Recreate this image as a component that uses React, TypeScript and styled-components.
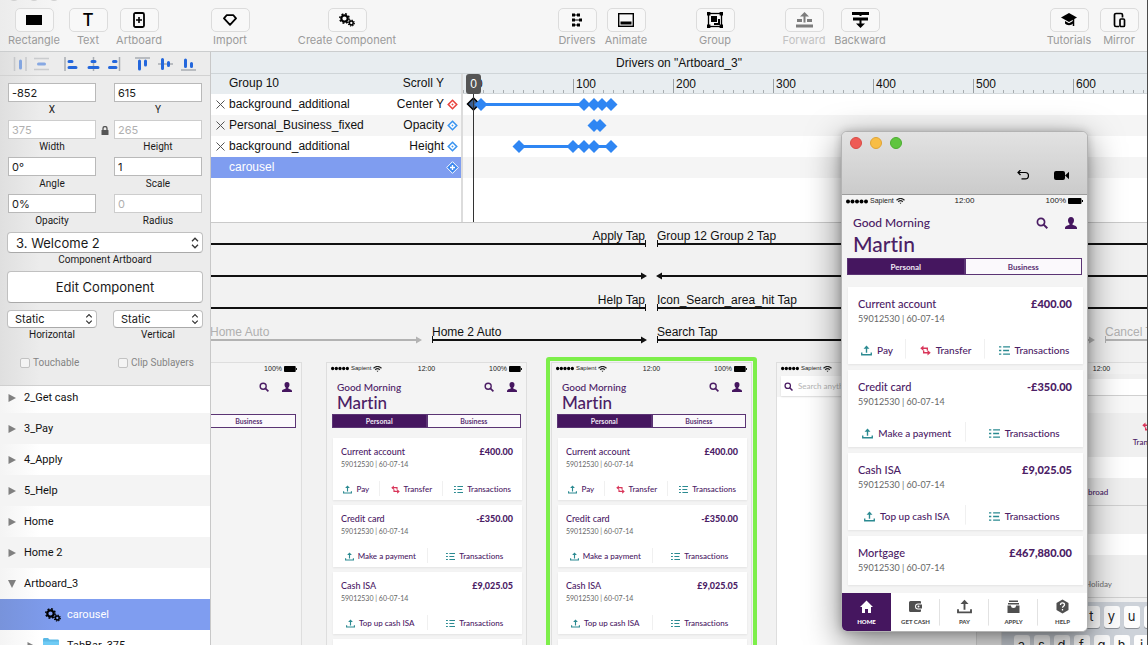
import React from 'react';
import styled, { createGlobalStyle, css } from 'styled-components';

const ui = `Inter, "Liberation Sans", sans-serif`;
const compact = `Roboto, "Liberation Sans", sans-serif`;
const helv = `"Liberation Sans", Arial, sans-serif`;
const round = `Lato, "Open Sans", sans-serif`;

const GlobalStyle = createGlobalStyle`
  *, *::before, *::after { box-sizing: border-box; }
  body { margin: 0; overflow: hidden; font-family: ${ui}; color: #111; }
  button, input, select { font: inherit; color: inherit; margin: 0; }
  svg { display: block; flex: none; }
`;

/* ---------- Shell ---------- */

const Shell = styled.div`
  position: relative;
  display: flex;
  flex-direction: column;
  height: 100vh;
  overflow: hidden;
  background: #f3f3f3;
  border-right: 1px solid #4a4a4a;
`;
const Workspace = styled.div`
  flex: 1;
  min-height: 0;
  display: grid;
  grid-template-columns: 211px minmax(0, 1fr);
`;

/* ---------- Toolbar ---------- */

const Toolbar = styled.header`
  position: relative;
  display: flex;
  gap: 47px;
  height: 52px;
  padding: 8px 8px 0;
  background: linear-gradient(90deg, #ececec, #f6f6f6 60px);
  border-bottom: 1px solid #cbcdce;
  overflow: hidden;
`;
const TitleLights = styled.div`
  position: absolute;
  top: -11px;
  left: 8px;
  display: flex;
  gap: 8px;
  i { width: 12px; height: 12px; border-radius: 50%; background: #cfcfcf; }
`;
const ToolGroup = styled.div<{ $gap?: number; $lead?: string }>`
  display: flex;
  gap: ${(p) => p.$gap ?? 0}px;
  margin-left: ${(p) => p.$lead ?? '0'};
`;
const ToolButton = styled.button<{ $w: number; $dim?: boolean }>`
  width: ${(p) => p.$w}px;
  display: flex;
  flex-direction: column;
  align-items: center;
  padding: 0;
  border: 0;
  background: none;
  font-size: 11px;
  line-height: 16px;
  white-space: nowrap;
  color: ${(p) => (p.$dim ? '#c2c2c2' : '#9b9b9b')};
`;
const ToolFace = styled.span<{ $dim?: boolean }>`
  width: 39px;
  height: 24px;
  flex: none;
  display: grid;
  place-items: center;
  border: 1px solid #dcdcdc;
  border-radius: 5px;
  background: #f8f8f8;
  color: ${(p) => (p.$dim ? '#7d7d7d' : '#000')};
`;
const LetterIcon = styled.span`
  font-size: 17px;
  line-height: 22px;
  font-weight: 500;
`;

const Gears = ({ w = 16 }: { w?: number }) => (
  <svg width={w} height={w} viewBox="0 0 16 16" fill="none" stroke="#000">
    <circle cx="5.500" cy="6.500" r="3.200" strokeWidth="2.200" />
    <circle cx="5.500" cy="6.500" r="4.700" strokeWidth="1.500" strokeDasharray="1.850 1.850" />
    <circle cx="12.300" cy="11" r="1.900" strokeWidth="1.500" />
    <circle cx="12.300" cy="11" r="3" strokeWidth="1.200" strokeDasharray="1.200 1.160" />
  </svg>
);

const icons = {
  rect: <svg width="16" height="10"><rect width="16" height="10" fill="#000" /></svg>,
  text: <LetterIcon>T</LetterIcon>,
  artboard: (
    <svg width="12" height="16" viewBox="0 0 12 16" fill="none" stroke="#000" strokeWidth="1.800">
      <rect x="1" y="1" width="10" height="14" rx="1.500" /><path d="M3 8h6M6 5v6" strokeWidth="1.600" />
    </svg>
  ),
  gem: (
    <svg width="14" height="12" viewBox="0 0 14 12" fill="none" stroke="#000" strokeWidth="1.800" strokeLinejoin="round">
      <path d="M3.600 1.200h6.800L13 4.400 7 10.800 1 4.400z" />
    </svg>
  ),
  gears: <Gears />,
  drivers: (
    <svg width="12" height="14" viewBox="0 0 12 14" fill="#000" stroke="#000">
      <path d="M1 2h6M3 7h6M1 12h6" strokeWidth="1" />
      <path d="M1 .5h3v3H1zM6 .5h3v3H6zM1 5.500h3v3H1zM8 5.500h3v3H8zM1 10.500h3v3H1zM6 10.500h3v3H6z" stroke="none" />
    </svg>
  ),
  animate: (
    <svg width="16" height="14"><rect x=".7" y=".7" width="14.600" height="12.600" fill="none" stroke="#000" strokeWidth="1.400" /><rect x="2.500" y="8.500" width="11" height="3" /></svg>
  ),
  group: (
    <svg width="16" height="16" viewBox="0 0 16 16">
      <rect x="1.500" y="1.500" width="13" height="13" fill="none" stroke="#000" strokeWidth="1.300" />
      <path d="M0 0h3.400v3.400H0zM12.600 0H16v3.400h-3.400zM0 12.600h3.400V16H0zM12.600 12.600H16V16h-3.400zM4 4h6v6H4zM11 7h2v6H7v-2h4z" />
    </svg>
  ),
  forward: (
    <svg width="17" height="16" viewBox="0 0 17 16" fill="currentColor">
      <path d="M8.500 0 13 4.500H9.500v6h-2v-6H4zM1 7h5v3H1zM11 7h5v3h-5zM0 12.500h17v3H0z" />
    </svg>
  ),
  backward: (
    <svg width="17" height="16" viewBox="0 0 17 16"><path d="M0 0h17v3H9.500v1h-2V3H0zM1 5.500h15v3H9.500v3H13L8.500 16 4 11.500h3.500v-3H1z" /></svg>
  ),
  tutorials: (
    <svg width="16" height="14" viewBox="0 0 16 14">
      <path d="M8 0l8 4.500-8 4.500L0 4.500z" /><path d="M4 8l4 2.300L12 8v2.500c-2 2.200-6 2.200-8 0z" /><path d="M12.500 5.500V13" stroke="#000" strokeWidth="1.500" />
    </svg>
  ),
  mirror: (
    <svg width="13" height="16" viewBox="0 0 13 16" fill="none" stroke="#000" strokeWidth="1.700">
      <path d="M6 14.500H3A1.500 1.500 0 0 1 1.500 13V3A1.500 1.500 0 0 1 3 1.500h5A1.500 1.500 0 0 1 9.500 3v2.500" /><rect x="7" y="7" width="4.500" height="7.500" rx="1" />
    </svg>
  ),
};

const Tool = ({ w, label, icon, dim }: { w: number; label: string; icon: keyof typeof icons; dim?: boolean }) => (
  <ToolButton type="button" $w={w} $dim={dim} disabled={dim}>
    <ToolFace $dim={dim}>{icons[icon]}</ToolFace>
    {label}
  </ToolButton>
);

/* ---------- Inspector ---------- */

const Sidebar = styled.aside`
  display: flex;
  flex-direction: column;
  min-height: 0;
  overflow: hidden;
  border-right: 1px solid #c8c8c8;
  background: linear-gradient(90deg, #dfdfdf, #ececec 40px);
`;
const AlignBar = styled.div`
  display: flex;
  align-items: center;
  height: 24px;
  flex: none;
  padding-left: 13px;
  border-bottom: 1px solid #d2d2d2;
`;
const AlignButton = styled.button<{ $gapAfter?: number; $dim?: boolean }>`
  padding: 0;
  border: 0;
  background: none;
  margin-right: ${(p) => p.$gapAfter ?? 8}px;
  opacity: ${(p) => (p.$dim ? 0.5 : 1)};
`;
const Inspector = styled.form`
  flex: none;
  height: 310px;
  padding: 7px 8px 0;
  border-bottom: 1px solid #cfcfcf;
`;
const FieldGrid = styled.div`
  display: grid;
  grid-template-columns: 88px 18px 88px;
  row-gap: 4px;
  align-items: start;
`;
const Field = styled.label<{ $gap?: number }>`
  display: flex;
  flex-direction: column;
  font: 10px/13px ${compact};
  gap: ${(p) => p.$gap ?? 1}px;
  text-align: center;
  color: #1a1a1a;
`;
const TextBox = styled.input`
  width: 100%;
  height: 19px;
  padding: 0 3px;
  border: 1px solid #b9b9b9;
  border-radius: 0;
  background: #fff;
  font-family: ${ui};
  font-size: 11px;
  color: #1a1a1a;
  &:disabled { color: #b0b0b0; border-color: #cdcdcd; }
`;
const LockCell = styled.span`
  display: grid;
  place-items: center;
  height: 20px;
`;
const SelectWrap = styled.span`
  position: relative;
  display: block;
  svg { position: absolute; right: 4px; top: 50%; transform: translateY(-50%); }
`;
const Select = styled.select<{ $large?: boolean }>`
  appearance: none;
  width: 100%;
  height: ${(p) => (p.$large ? 21 : 18)}px;
  display: block;
  padding: 0 18px 0 ${(p) => (p.$large ? 8 : 7)}px;
  border: 1px solid #c0c0c0;
  border-bottom-color: #a9a9a9;
  border-radius: 4px;
  background: #fff;
  font-family: ${ui};
  font-size: ${(p) => (p.$large ? 13 : 11)}px;
  line-height: 16px;
  color: #1a1a1a;
`;
const PushButton = styled.button`
  display: block;
  width: 100%;
  height: 32px;
  margin: 5px 0 7px;
  border: 1px solid #c0c0c0;
  border-bottom-color: #a9a9a9;
  border-radius: 4px;
  background: #fff;
  font-size: 13px;
  color: #1a1a1a;
`;
const Stack = styled.div`
  margin: 0 -1px;
  padding-top: 5px;
`;
const SplitRow = styled.div`
  display: grid;
  grid-template-columns: 90px 90px;
  justify-content: space-between;
`;
const Checks = styled.div`
  display: grid;
  grid-template-columns: 98px 1fr;
  padding: 15px 0 0 12px;
`;
const Check = styled.label`
  display: flex;
  align-items: center;
  gap: 3px;
  font: 10px/14px ${compact};
  color: #848484;
  white-space: nowrap;
  input {
    appearance: none;
    width: 10px;
    height: 10px;
    border: 1px solid #c2c2c2;
    border-radius: 2px;
    background: #f4f4f4;
  }
`;

const Chevrons = ({ h = 12 }: { h?: number }) => (
  <svg width="8" height={h} viewBox="0 0 8 12" fill="none" stroke="#333" strokeWidth="1.300">
    <path d="M1 4.200 4 1.200l3 3M1 7.800l3 3 3-3" />
  </svg>
);

const alignIcons: { name: string; after?: number; dim?: boolean; bars: string; rail: string }[] = [
  { name: 'Distribute horizontally', dim: true, after: 6, rail: 'M1.500 0v14M13 0v14', bars: 'M7.500 4v7' },
  { name: 'Distribute vertically', dim: true, after: 15, rail: 'M0 1.500h15M0 12.500h15', bars: 'M4.500 7h6' },
  { name: 'Align left', rail: 'M1 0v14', bars: 'M5 4.500h3M5 10.500h7' },
  { name: 'Align centre', after: 6, rail: 'M6.500 0v14', bars: 'M5 4.500h3M2 10.500h9' },
  { name: 'Align right', after: 12, rail: 'M11.500 0v14', bars: 'M5.500 4.500h2.500M1.500 10.500h6.500' },
  { name: 'Align top', rail: 'M0 1h15', bars: 'M4.500 4v8M10.500 4v4' },
  { name: 'Align middle', rail: 'M0 7h15', bars: 'M4.500 2.500v9M10.500 5.500v3' },
  { name: 'Align bottom', rail: 'M0 13h15', bars: 'M4.500 3v6.500M10.500 6.500v3' },
];

/* ---------- Layer tree ---------- */

const TreeClip = styled.nav`
  flex: 1;
  min-height: 0;
  overflow: hidden;
  background: #fff;
`;
const Tree = styled.ul`
  margin: -4px 0 0;
  padding: 0;
  list-style: none;
`;
const TreeRow = styled.li<{ $depth?: number; $selected?: boolean }>`
  display: flex;
  align-items: center;
  gap: ${(p) => (p.$selected ? 6 : 8)}px;
  height: 31px;
  padding-left: ${(p) => 8 + (p.$depth ?? 0) * 19}px;
  font: 11px/14px ${compact};
  background: linear-gradient(90deg, #f4f4f4, #fff 40px);
  &:nth-child(even) { background: #f4f4f4; }
  ${(p) => p.$selected && css`
    &&& { background: linear-gradient(90deg, #7893db, #7f9df0 60px); }
    color: #fff;
    padding-left: 45px;
  `}
`;
const Twisty = ({ open }: { open?: boolean }) => (
  <svg width="8" height="8" viewBox="0 0 8 8" fill="#808080">
    <path d={open ? 'M0 0h8L4 8z' : 'M.500 0 8 4 .500 8z'} />
  </svg>
);
const Folder = () => (
  <svg width="16" height="15" viewBox="0 0 16 15"><path d="M0 1.500C0 .7.500 0 1.300 0H5l1.500 1.500h8c.8 0 1.500.5 1.500 1.300V15H0z" fill="#5cb9e6" /><path d="M0 3.500h16V15H0z" fill="#6fcbf5" /></svg>
);

/* ---------- Drivers panel ---------- */

const Main = styled.main`
  display: flex;
  flex-direction: column;
  min-width: 0;
  min-height: 0;
`;
const DriversTitle = styled.h1`
  margin: 0;
  height: 22px;
  flex: none;
  font: 12px/23px ${helv};
  text-align: center;
  background: #e8edf0;
  border-bottom: 1px solid #cfd5d8;
`;
const Drivers = styled.section`
  display: grid;
  grid-template-columns: 252px minmax(0, 1fr);
  height: 149px;
  flex: none;
  border-bottom: 1px solid #cacaca;
  background: #fff;
  font: 12px/18px ${helv};
`;
const PropTable = styled.table`
  width: 100%;
  height: 104px;
  border-collapse: collapse;
  table-layout: fixed;
  th, td { height: 21px; padding: 0 0 2px; font-weight: 400; text-align: left; white-space: nowrap; }
  thead th { height: 20px; background: #e8edf0; }
  tbody tr:nth-child(even) { background: #f5f5f5; }
`;
const PropRow = styled.tr<{ $selected?: boolean }>`
  ${(p) => p.$selected && css`&&&& { background: #7f9df0; color: #fff; }`}
`;
const PropCell = styled.td<{ $right?: boolean }>`
  && { text-align: ${(p) => (p.$right ? 'right' : 'left')}; }
`;
const IconCell = styled.td`
  && { padding: 0; }
  svg { margin: 0 auto; }
`;
const PropPane = styled.div`
  border-right: 2px solid #dcdcdc;
`;
const Timeline = styled.div`
  position: relative;
  min-width: 0;
  overflow: hidden;
`;
const Ruler = styled.div`
  display: flex;
  height: 20px;
  padding: 5px 0 0 10px;
  border-bottom: 1px solid #d4d9dc;
  background:
    repeating-linear-gradient(90deg, #a9aeb1 0 1px, transparent 1px 10px) 0 100% / 100% 3px no-repeat,
    #e8edf0;
`;
const RulerMark = styled.span`
  flex: 0 0 100px;
  padding-left: 2px;
  border-left: 1px solid #9a9fa2;
  line-height: 11px;
`;
const Track = styled.div<{ $alt?: boolean }>`
  height: 21px;
  background: ${(p) => (p.$alt ? '#f5f5f5' : '#fff')};
`;
const Playhead = styled.div`
  position: absolute;
  top: 0;
  bottom: 0;
  left: 3px;
  width: 15px;
  display: flex;
  flex-direction: column;
  align-items: center;
  span {
    width: 15px;
    height: 20px;
    border-radius: 3px;
    background: #555;
    color: #fff;
    line-height: 20px;
    text-align: center;
  }
  i { flex: 1; width: 1px; background: #333; }
`;

const Remove = () => (
  <svg width="9" height="9" viewBox="0 0 9 9" stroke="#555" strokeWidth="1"><path d="M.5.5l8 8M8.500.5l-8 8" /></svg>
);
const KeyIcon = ({ color, inverted }: { color: string; inverted?: boolean }) => (
  <svg width="13" height="13" viewBox="0 0 13 13" fill="none">
    {inverted && <path d="M6.500.7 12.300 6.500 6.500 12.300.7 6.500z" fill="#3b86ee" stroke="#fff" />}
    {!inverted && <path d="M6.500 2.300l4.200 4.200-4.200 4.200-4.200-4.200z" stroke={color} strokeWidth="1.600" fill="#fff" />}
    <path d={inverted ? 'M6.500 4v5M4 6.500h5' : 'M6.500 5.500v2M5.500 6.500h2'} stroke={inverted ? '#fff' : color} strokeWidth={inverted ? 1.400 : 0.800} />
  </svg>
);
const Keys = ({ at, first }: { at: number[]; first?: boolean }) => (
  <svg width="200" height="21" fill="#2f86f3">
    {first && <path d="M10.500 4l6 6-6 6-6-6z" fill="#3c5f91" stroke="#000" strokeWidth="1.500" />}
    <rect x={at[0]} y="9" width={at[at.length - 1] - at[0]} height="3" />
    {at.map((x) => <path key={x} d={`M${x} 4l6.500 6.500-6.500 6.500-6.500-6.500z`} />)}
  </svg>
);

const driverRows = [
  { name: 'background_additional', prop: 'Center Y', color: '#e8453f', keys: [18, 121, 131, 139, 148], first: true },
  { name: 'Personal_Business_fixed', prop: 'Opacity', color: '#3d95ef', keys: [131, 137] },
  { name: 'background_additional', prop: 'Height', color: '#3d95ef', keys: [56, 110, 121, 131, 148] },
];

/* ---------- Canvas ---------- */

const Canvas = styled.section`
  position: relative;
  flex: 1;
  min-height: 0;
  overflow: hidden;
  background: #f2f2f2;
`;
const Arrows = styled.svg`
  position: absolute;
  top: 0;
  left: 0;
`;
const FlowLabel = styled.span<{ $x: number; $y: number; $end?: boolean; $dim?: boolean }>`
  position: absolute;
  top: ${(p) => p.$y}px;
  left: ${(p) => p.$x}px;
  ${(p) => p.$end && css`transform: translateX(-100%);`}
  font: 12px/14px ${helv};
  white-space: nowrap;
  color: ${(p) => (p.$dim ? '#b0b0b0' : '#111')};
`;
const Artboard = styled.article<{ $x: number; $white?: boolean }>`
  position: absolute;
  left: ${(p) => p.$x}px;
  top: 140px;
  width: 199px;
  height: 354px;
  overflow: hidden;
  background: ${(p) => (p.$white ? '#fff' : '#f4f4f4')};
  box-shadow: 0 0 0 1px #dedede;
`;
const Selection = styled.div`
  position: absolute;
  left: 335px;
  top: 134px;
  width: 211px;
  height: 366px;
  border: 4px solid #7def4a;
  border-radius: 3px;
`;

/* ---------- Phone screen ---------- */

const smallVars = css`
  --status-h: 11px; --status-fs: 7px; --carrier-fs: 6px; --head-pt: 6px; --head-pr: 9px; --head-px: 10px;
  --hi-fs: 10px; --hi-lh: 14px; --name-fs: 17px; --name-lh: 18px;
  --tabs-h: 14px; --tab-fs: 7px; --cards-gap: 10px; --between: 5px;
  --card-pt: 8px; --card-pl: 8px; --card-pr: 9px; --title-fs: 9px; --title-lh: 12px;
  --num-fs: 7px; --num-lh: 10px; --act-mt: 9px; --act-h: 22px; --act-fs: 8px;
  --act-icon: 9px; --act-gap: 4px; --head-icon: 10px; --head-gap: 13px;
`;
const largeVars = css`
  --status-h: 12px; --status-fs: 8px; --carrier-fs: 7px; --head-pt: 8px; --head-pr: 10px; --head-px: 11px;
  --hi-fs: 12px; --hi-lh: 16px; --name-fs: 21px; --name-lh: 25px;
  --tabs-h: 17px; --tab-fs: 8px; --cards-gap: 12px; --between: 6px;
  --card-pt: 10px; --card-pl: 10px; --card-pr: 11px; --title-fs: 11px; --title-lh: 14px;
  --num-fs: 9px; --num-lh: 14px; --act-mt: 10px; --act-h: 28px; --act-fs: 10px;
  --act-icon: 11px; --act-gap: 5px; --head-icon: 12px; --head-gap: 17px;
`;
const Screen = styled.div<{ $large?: boolean }>`
  ${(p) => (p.$large ? largeVars : smallVars)}
  font-family: ${round};
  font-variant-ligatures: none;
  color: #4b2065;
  white-space: nowrap;
`;
const StatusBar = styled.div`
  display: grid;
  grid-template-columns: 1fr auto 1fr;
  align-items: center;
  height: var(--status-h);
  padding: 0 4px;
  font: var(--status-fs)/var(--status-h) ${helv};
  color: #222;
  span { display: flex; align-items: center; gap: 2px; }
  span:first-child { font-size: var(--carrier-fs); }
  span:last-child { justify-content: flex-end; }
`;
const Header = styled.div`
  display: flex;
  justify-content: space-between;
  padding: var(--head-pt) var(--head-pr) 2px var(--head-px);
`;
const Greeting = styled.div`
  font-size: var(--hi-fs);
  line-height: var(--hi-lh);
  font-weight: 500;
  strong { display: block; font-size: var(--name-fs); line-height: var(--name-lh); font-weight: 500; }
`;
const HeaderIcons = styled.div`
  display: flex;
  align-items: center;
  gap: var(--head-gap);
  height: var(--hi-lh);
  svg { width: var(--head-icon); height: var(--head-icon); }
`;
const Segments = styled.div`
  display: grid;
  grid-template-columns: 1fr 1fr;
  margin: 0 5px var(--cards-gap);
`;
const Segment = styled.button<{ $on?: boolean }>`
  height: var(--tabs-h);
  padding: 0;
  border: 1px solid #5b3474;
  border-radius: 0;
  background: ${(p) => (p.$on ? '#45165f' : '#fbf9fc')};
  color: ${(p) => (p.$on ? '#eee6f2' : '#5b3474')};
  font-size: var(--tab-fs);
  line-height: 8px;
  font-weight: 700;
`;
const Cards = styled.div`
  display: flex;
  flex-direction: column;
  gap: var(--between);
  margin: 0 4px 0 6px;
`;
const Card = styled.section`
  background: #fff;
  box-shadow: 0 1px 2px rgba(0, 0, 0, 0.07);
`;
const CardHead = styled.div`
  display: flex;
  justify-content: space-between;
  padding: var(--card-pt) var(--card-pr) 1px var(--card-pl);
  font-size: var(--title-fs);
  line-height: var(--title-lh);
  font-weight: 500;
  strong { font-weight: 900; }
`;
const AccountNo = styled.div`
  padding: 0 var(--card-pl);
  margin-bottom: var(--act-mt);
  font-size: var(--num-fs);
  line-height: var(--num-lh);
  color: #666;
`;
const Actions = styled.div<{ $cols: string }>`
  display: grid;
  grid-template-columns: ${(p) => p.$cols};
  height: var(--act-h);
`;
const Action = styled.button`
  display: flex;
  align-items: center;
  justify-content: center;
  gap: var(--act-gap);
  padding: 0;
  border: 0;
  background: linear-gradient(#f0f0f0, #f0f0f0) 100% 40% / 1px 70% no-repeat;
  font-size: var(--act-fs);
  font-weight: 500;
  color: #4b2065;
  svg { width: var(--act-icon); height: var(--act-icon); }
  &:last-child { background: none; }
`;

const Upload = ({ color = '#2b8a91' }: { color?: string }) => (
  <svg width="15" height="15" viewBox="0 0 12 12" fill="none" stroke={color} strokeWidth="1.500">
    <path d="M6 8.500V3M.8 8.200v2.500h10.400V8.200" /><path d="M6 .5 9.200 4H2.800z" fill={color} stroke="none" />
  </svg>
);
const Transfer = () => (
  <svg width="11" height="11" viewBox="0 0 12 12" fill="none" stroke="#d9365a" strokeWidth="1.500">
    <path d="M2.500 3.500H8V6M9.500 8.500H4V6" />
    <path d="M3.800.5v6L.300 3.500zM8.200 5.500v6l3.500-3z" fill="#d9365a" stroke="none" />
  </svg>
);
const ListIcon = () => (
  <svg viewBox="0 0 12 12" stroke="#2b8a91" strokeWidth="1.400"><path d="M0 2h2.500M0 6h2.500M0 10h2.500M4.500 2H12M4.500 6H11M4.500 10H12" /></svg>
);
const SearchIcon = ({ w = 9 }: { w?: number }) => (
  <svg width={w} height={w} viewBox="0 0 12 12" fill="none" stroke="#4b1d64" strokeWidth="1.700"><circle cx="5" cy="5" r="3.600" /><path d="M7.600 7.600 11.300 11.300" strokeWidth="2" /></svg>
);
const PersonIcon = () => (
  <svg viewBox="0 0 12 12" fill="#45165f"><path d="M6 0c2 0 3 1.300 3 3.200C9 5 8.200 6 7.500 6.700v1c1.500.8 4.500 1 4.500 3.300v1H0v-1c0-2.300 3-2.500 4.500-3.300v-1C3.800 6 3 5 3 3.200 3 1.300 4 0 6 0z" /></svg>
);
const Dots = ({ w = 22 }: { w?: number }) => (
  <svg width={w} height="5" viewBox="0 0 22 5">{[2, 6.500, 11, 15.500, 20].map((x) => <circle key={x} cx={x} cy="2.500" r="2" />)}</svg>
);
const Wifi = () => (
  <svg width="9" height="6" viewBox="0 0 9 6" fill="none" stroke="#222" strokeWidth="1.200"><path d="M.500 2.200c2.500-2.200 5.500-2.200 8 0M2.200 3.800c1.400-1.300 3.200-1.300 4.600 0" /><path d="M3.500 4.700h2l-1 1.300z" fill="#222" stroke="none" /></svg>
);
const Battery = ({ w = 14 }: { w?: number }) => (
  <svg width={w} height="6" viewBox="0 0 15 6" preserveAspectRatio="none"><rect width="13.500" height="6" rx="1" /><rect x="14" y="2" width="1" height="2" /></svg>
);

const Status = ({ large }: { large?: boolean }) => (
  <StatusBar>
    <span><Dots w={large ? 22 : 18} /> Sapient <Wifi /></span>
    <span>12:00</span>
    <span>100% <Battery w={large ? 15 : 13} /></span>
  </StatusBar>
);

const accounts = [
  { name: 'Current account', amount: '£400.00', actions: ['Pay', 'Transfer', 'Transactions'] },
  { name: 'Credit card', amount: '-£350.00', actions: ['Make a payment', 'Transactions'] },
  { name: 'Cash ISA', amount: '£9,025.05', actions: ['Top up cash ISA', 'Transactions'] },
  { name: 'Mortgage', amount: '£467,880.00', actions: [] as string[] },
];

const actionIcon = (a: string) =>
  a === 'Transactions' ? <ListIcon /> : a === 'Transfer' ? <Transfer /> : <Upload />;

const HomeScreen = ({ large, count = 4 }: { large?: boolean; count?: number }) => (
  <Screen $large={large}>
    <Status large={large} />
    <Header>
      <Greeting>Good Morning<strong>Martin</strong></Greeting>
      <HeaderIcons><SearchIcon /><PersonIcon /></HeaderIcons>
    </Header>
    <Segments>
      <Segment type="button" $on>Personal</Segment>
      <Segment type="button">Business</Segment>
    </Segments>
    <Cards>
      {accounts.slice(0, count).map((a) => (
        <Card key={a.name}>
          <CardHead><span>{a.name}</span><strong>{a.amount}</strong></CardHead>
          <AccountNo>59012530 | 60-07-14</AccountNo>
          {a.actions.length > 0 && (
            <Actions $cols={a.actions.length === 3 ? '58fr 79fr 98fr' : '1fr 1fr'}>
              {a.actions.map((x) => <Action type="button" key={x}>{actionIcon(x)}{x}</Action>)}
            </Actions>
          )}
        </Card>
      ))}
    </Cards>
  </Screen>
);

const SearchBox = styled.label`
  display: flex;
  align-items: center;
  gap: 5px;
  height: 20px;
  margin: 2px 4px 0;
  padding-left: 3px;
  background: #fff;
  box-shadow: 0 1px 2px rgba(0, 0, 0, 0.1);
  input { border: 0; padding: 0; width: 120px; background: none; font: 8px/12px ${round}; }
  input::placeholder { color: #b5b5b5; }
`;
const SearchHead = styled.div`
  background: #f4f4f4;
  padding-bottom: 1px;
`;

/* Menu screen that sits partly under the preview window */
const Band = styled.div<{ $h: number; $bg?: string; $line?: boolean; $pad?: string }>`
  height: ${(p) => p.$h}px;
  padding: ${(p) => p.$pad ?? '0'};
  background: ${(p) => p.$bg ?? '#f0f0f0'};
  border-bottom: ${(p) => (p.$line ? '1px solid #d0d0d0' : '0')};
  font-size: 8px;
  line-height: 10px;
  font-weight: 500;
`;
const Tile = styled.span`
  display: flex;
  flex-direction: column;
  align-items: center;
  gap: 4px;
  width: 32px;
`;
const Muted = styled.span`
  color: #777;
`;
const Keyboard = styled.div`
  display: flex;
  flex-direction: column;
  align-items: center;
  gap: 7px;
  height: 110px;
  padding-top: 4px;
  background: #cdd2d9;
`;
const KeyRow = styled.div`
  display: flex;
  gap: 4px;
`;
const Key = styled.span`
  width: 16px;
  height: 22px;
  border-radius: 3px;
  background: #fdfdfd;
  box-shadow: 0 1px 0 #8e9298;
  font: 13px/20px ${ui};
  text-align: center;
  color: #222;
`;

/* ---------- Preview window ---------- */

const PreviewWindow = styled.section`
  position: absolute;
  top: 131px;
  right: 59px;
  width: 247px;
  height: 501px;
  display: flex;
  flex-direction: column;
  overflow: hidden;
  border: 1px solid #b3b3b3;
  border-radius: 6px;
  background: #f4f4f4;
  box-shadow: 0 10px 34px rgba(0, 0, 0, 0.5), 0 0 8px rgba(0, 0, 0, 0.2);
`;
const PreviewBar = styled.header`
  display: flex;
  flex-direction: column;
  justify-content: space-between;
  height: 63px;
  flex: none;
  padding: 5px 17px 14px 8px;
  background: linear-gradient(#e2e2e2, #cbcbcb);
  border-bottom: 1px solid #9c9c9c;
`;
const Lights = styled.div`
  display: flex;
  gap: 8px;
`;
const Light = styled.button<{ $c: string; $edge: string }>`
  width: 12px;
  height: 12px;
  padding: 0;
  border: 1px solid ${(p) => p.$edge};
  border-radius: 50%;
  background: ${(p) => p.$c};
`;
const BarTools = styled.div`
  display: flex;
  align-items: center;
  justify-content: flex-end;
  gap: 25px;
`;
const BarTool = styled.button`
  padding: 0;
  border: 0;
  background: none;
`;
const PreviewBody = styled.div`
  flex: 1;
  min-height: 0;
  overflow: hidden;
`;
const TabBar = styled.nav`
  display: grid;
  grid-template-columns: repeat(5, 1fr);
  height: 38px;
  flex: none;
  background: #fff;
`;
const Tab = styled.button<{ $on?: boolean }>`
  display: flex;
  flex-direction: column;
  align-items: center;
  gap: 3px;
  padding: 6px 0 0;
  border: 0;
  background: ${(p) => (p.$on ? '#45165f' : 'linear-gradient(#e2e2e2, #e2e2e2) 100% 50% / 1px 70% no-repeat')};
  color: ${(p) => (p.$on ? '#fff' : '#4f4f4f')};
  font: 900 6px/10px ${round};
  &:last-child { background: none; }
`;
const tabIcons: Record<string, React.ReactNode> = {
  HOME: <svg width="15" height="15" viewBox="0 0 15 15" fill="#fff"><path d="M7.500 1.500 14 8h-2v6H9v-4H6v4H3V8H1z" /></svg>,
  'GET CASH': (
    <svg width="15" height="15" viewBox="0 0 15 15" fill="#4f4f4f"><path d="M2.500 2H12a1 1 0 0 1 1 1v1.500h-3a3 3 0 0 0 0 6h3V12a1 1 0 0 1-1 1H2.500A1.500 1.500 0 0 1 1 11.500v-8A1.500 1.500 0 0 1 2.500 2z" /><path d="M10 5.500h4v4h-4a2 2 0 0 1 0-4z" /><circle cx="10.500" cy="7.500" r="1" fill="#fff" /></svg>
  ),
  PAY: <Upload color="#4f4f4f" />,
  APPLY: <svg width="15" height="15" viewBox="0 0 15 15" fill="#4f4f4f"><path d="M3 1.500h9V3H3zM2 4h11v1.500H2zM1.500 6.500H5a2.500 2.500 0 0 0 5 0h3.500V14h-12z" /></svg>,
  HELP: (
    <svg width="15" height="15" viewBox="0 0 15 15"><path d="M7.500.5 13.500 4v7l-6 3.500-6-3.500V4z" fill="#4f4f4f" /><path d="M5.500 6c0-2.800 4-2.600 4-.3 0 1.500-2 1.500-2 3M7.500 10v1.500" fill="none" stroke="#fff" strokeWidth="1.300" /></svg>
  ),
};

export default function App() {
  return (
    <Shell>
      <GlobalStyle />
      <Toolbar>
        <TitleLights><i /><i /><i /></TitleLights>
        <ToolGroup>
          <Tool w={52} label="Rectangle" icon="rect" />
          <Tool w={56} label="Text" icon="text" />
          <Tool w={46} label="Artboard" icon="artboard" />
        </ToolGroup>
        <ToolGroup><Tool w={42} label="Import" icon="gem" /></ToolGroup>
        <ToolGroup><Tool w={98} label="Create Component" icon="gears" /></ToolGroup>
        <ToolGroup $gap={7} $lead="114px">
          <Tool w={40} label="Drivers" icon="drivers" />
          <Tool w={44} label="Animate" icon="animate" />
        </ToolGroup>
        <ToolGroup><Tool w={40} label="Group" icon="group" /></ToolGroup>
        <ToolGroup $gap={8}>
          <Tool w={44} label="Forward" icon="forward" dim />
          <Tool w={52} label="Backward" icon="backward" />
        </ToolGroup>
        <ToolGroup $gap={7} $lead="auto">
          <Tool w={46} label="Tutorials" icon="tutorials" />
          <Tool w={40} label="Mirror" icon="mirror" />
        </ToolGroup>
      </Toolbar>

      <Workspace>
        <Sidebar>
          <AlignBar>
            {alignIcons.map((a) => (
              <AlignButton type="button" key={a.name} aria-label={a.name} $gapAfter={a.after} $dim={a.dim}>
                <svg width="15" height="14" viewBox="0 0 15 14" fill="none">
                  <path d={a.rail} stroke="#a9adb2" strokeWidth="1.500" />
                  <path d={a.bars} stroke="#2467dc" strokeWidth="3" strokeLinecap="round" />
                </svg>
              </AlignButton>
            ))}
          </AlignBar>
          <Inspector>
            <FieldGrid>
              <Field><TextBox defaultValue="-852" />X</Field><span />
              <Field><TextBox defaultValue="615" />Y</Field>
              <Field><TextBox defaultValue="375" disabled />Width</Field>
              <LockCell>
                <svg width="8" height="9" viewBox="0 0 8 9"><path d="M2 4V2.500a2 2 0 0 1 4 0V4" fill="none" stroke="#555" strokeWidth="1.300" /><rect x=".5" y="4" width="7" height="5" rx=".6" fill="#555" /></svg>
              </LockCell>
              <Field><TextBox defaultValue="265" disabled />Height</Field>
              <Field><TextBox defaultValue="0°" />Angle</Field><span />
              <Field><TextBox defaultValue="1" />Scale</Field>
              <Field><TextBox defaultValue="0%" />Opacity</Field><span />
              <Field><TextBox defaultValue="0" disabled />Radius</Field>
            </FieldGrid>
            <Stack>
              <Field $gap={0}>
                <SelectWrap><Select $large defaultValue="w"><option value="w">3. Welcome 2</option></Select><Chevrons /></SelectWrap>
                Component Artboard
              </Field>
              <PushButton type="button">Edit Component</PushButton>
              <SplitRow>
                <Field $gap={0}>
                  <SelectWrap><Select defaultValue="s"><option value="s">Static</option></Select><Chevrons h={11} /></SelectWrap>
                  Horizontal
                </Field>
                <Field $gap={0}>
                  <SelectWrap><Select defaultValue="s"><option value="s">Static</option></Select><Chevrons h={11} /></SelectWrap>
                  Vertical
                </Field>
              </SplitRow>
            </Stack>
            <Checks>
              <Check><input type="checkbox" disabled />Touchable</Check>
              <Check><input type="checkbox" disabled />Clip Sublayers</Check>
            </Checks>
          </Inspector>
          <TreeClip>
            <Tree>
              {['2_Get cash', '3_Pay', '4_Apply', '5_Help', 'Home', 'Home 2'].map((n) => (
                <TreeRow key={n}><Twisty />{n}</TreeRow>
              ))}
              <TreeRow><Twisty open />Artboard_3</TreeRow>
              <TreeRow $selected><Gears />carousel</TreeRow>
              <TreeRow $depth={1}><Twisty /><Folder />TabBar_375</TreeRow>
            </Tree>
          </TreeClip>
        </Sidebar>

        <Main>
          <DriversTitle>Drivers on "Artboard_3"</DriversTitle>
          <Drivers>
            <PropPane>
              <PropTable>
                <colgroup><col width="18" /><col /><col width="60" /><col width="17" /></colgroup>
                <thead>
                  <tr><th /><th>Group 10</th><PropCell as="th" $right>Scroll Y</PropCell><th /></tr>
                </thead>
                <tbody>
                  {driverRows.map((r) => (
                    <PropRow key={r.prop}>
                      <IconCell><Remove /></IconCell>
                      <PropCell>{r.name}</PropCell>
                      <PropCell $right>{r.prop}</PropCell>
                      <IconCell><KeyIcon color={r.color} /></IconCell>
                    </PropRow>
                  ))}
                  <PropRow $selected>
                    <td /><PropCell>carousel</PropCell><td /><IconCell><KeyIcon color="#fff" inverted /></IconCell>
                  </PropRow>
                </tbody>
              </PropTable>
            </PropPane>
            <Timeline>
              <Ruler>
                {[0, 100, 200, 300, 400, 500, 600].map((n) => <RulerMark key={n}>{n}</RulerMark>)}
              </Ruler>
              {driverRows.map((r, i) => (
                <Track key={r.prop} $alt={i === 1}><Keys at={r.keys} first={r.first} /></Track>
              ))}
              <Track $alt />
              <Playhead><span>0</span><i /></Playhead>
            </Timeline>
          </Drivers>

          <Canvas>
            <Arrows width="2000" height="130" fill="none" strokeWidth="2" stroke="#111">
              <path d="M0 21h434.500M446 21H2000M0 53h430M450 53H2000M0 85h434.500M446 85H2000M221 117h209M446 117h290" />
              <path d="M434.500 17v7M446.500 17v7M434.500 81v7M446.500 81v7M221.500 113v7M446.500 113v7" strokeWidth="1" />
              <path d="M436 53l-6-3.500v7zM445 53l6-3.500v7zM436 117l-6-3.500v7z" fill="#111" stroke="none" />
              <g stroke="#b3b3b3"><path d="M0 117h206M736 117h142M894 117H2000" /><path d="M894.500 113v7" strokeWidth="1" /></g>
              <path d="M211 117l-6-3.500v7zM884 117l-6-3.500v7z" fill="#b3b3b3" stroke="none" />
            </Arrows>
            <FlowLabel $x={434} $y={6} $end>Apply Tap</FlowLabel>
            <FlowLabel $x={446} $y={6}>Group 12 Group 2 Tap</FlowLabel>
            <FlowLabel $x={434} $y={70} $end>Help Tap</FlowLabel>
            <FlowLabel $x={446} $y={70}>Icon_Search_area_hit Tap</FlowLabel>
            <FlowLabel $x={-1} $y={102} $dim>Home Auto</FlowLabel>
            <FlowLabel $x={221} $y={102}>Home 2 Auto</FlowLabel>
            <FlowLabel $x={446} $y={102}>Search Tap</FlowLabel>
            <FlowLabel $x={894} $y={102} $dim>Cancel Tap</FlowLabel>

            <Artboard $x={-109}><HomeScreen count={0} /></Artboard>
            <Artboard $x={116}><HomeScreen /></Artboard>
            <Artboard $x={341}><HomeScreen /></Artboard>
            <Selection />
            <Artboard $x={566} $white>
              <Screen>
                <SearchHead>
                  <Status />
                  <SearchBox><SearchIcon /><input placeholder="Search anything" aria-label="Search" /></SearchBox>
                </SearchHead>
              </Screen>
            </Artboard>
            <Artboard $x={791}>
              <Screen>
                <Status />
                <Band $h={5} />
                <Band $h={17} $bg="#fff" $line />
                <Band $h={17} $bg="#f8f8f8" />
                <Band $h={44} $pad="9px 0 0 129px"><Tile><Transfer />Transfer</Tile></Band>
                <Band $h={21} $bg="#fff" />
                <Band $h={28} $line $pad="9px 0 0 82px">abroad</Band>
                <Band $h={28} />
                <Band $h={21} $bg="#fff" />
                <Band $h={43} $line $pad="24px 0 0 83px"><Muted>Holiday</Muted></Band>
                <Band $h={4} />
                <Keyboard>
                  {['qwertyuiop', 'asdfghjkl'].map((r) => (
                    <KeyRow key={r}>{[...r].map((k) => <Key key={k}>{k}</Key>)}</KeyRow>
                  ))}
                </Keyboard>
              </Screen>
            </Artboard>
          </Canvas>
        </Main>
      </Workspace>

      <PreviewWindow>
        <PreviewBar>
          <Lights>
            <Light type="button" aria-label="Close" $c="#ee5b55" $edge="#d84a44" />
            <Light type="button" aria-label="Minimise" $c="#f8bd45" $edge="#dfa334" />
            <Light type="button" aria-label="Zoom" $c="#5fc53f" $edge="#4bac2f" />
          </Lights>
          <BarTools>
            <BarTool type="button" aria-label="Restart">
              <svg width="12" height="10" viewBox="0 0 12 10" fill="none" stroke="#000" strokeWidth="1.200"><path d="M3.500 0 1 2.500 3.500 5M1 2.500h7.300a3 3 0 0 1 0 6.300H4.500" /></svg>
            </BarTool>
            <BarTool type="button" aria-label="Record">
              <svg width="16" height="9" viewBox="0 0 16 9"><rect width="11" height="9" rx="2" /><path d="M11 4.500 15 .8v7.400z" /></svg>
            </BarTool>
          </BarTools>
        </PreviewBar>
        <PreviewBody><HomeScreen large /></PreviewBody>
        <TabBar>
          {Object.keys(tabIcons).map((t) => (
            <Tab type="button" key={t} $on={t === 'HOME'}>{tabIcons[t]}{t}</Tab>
          ))}
        </TabBar>
      </PreviewWindow>
    </Shell>
  );
}
